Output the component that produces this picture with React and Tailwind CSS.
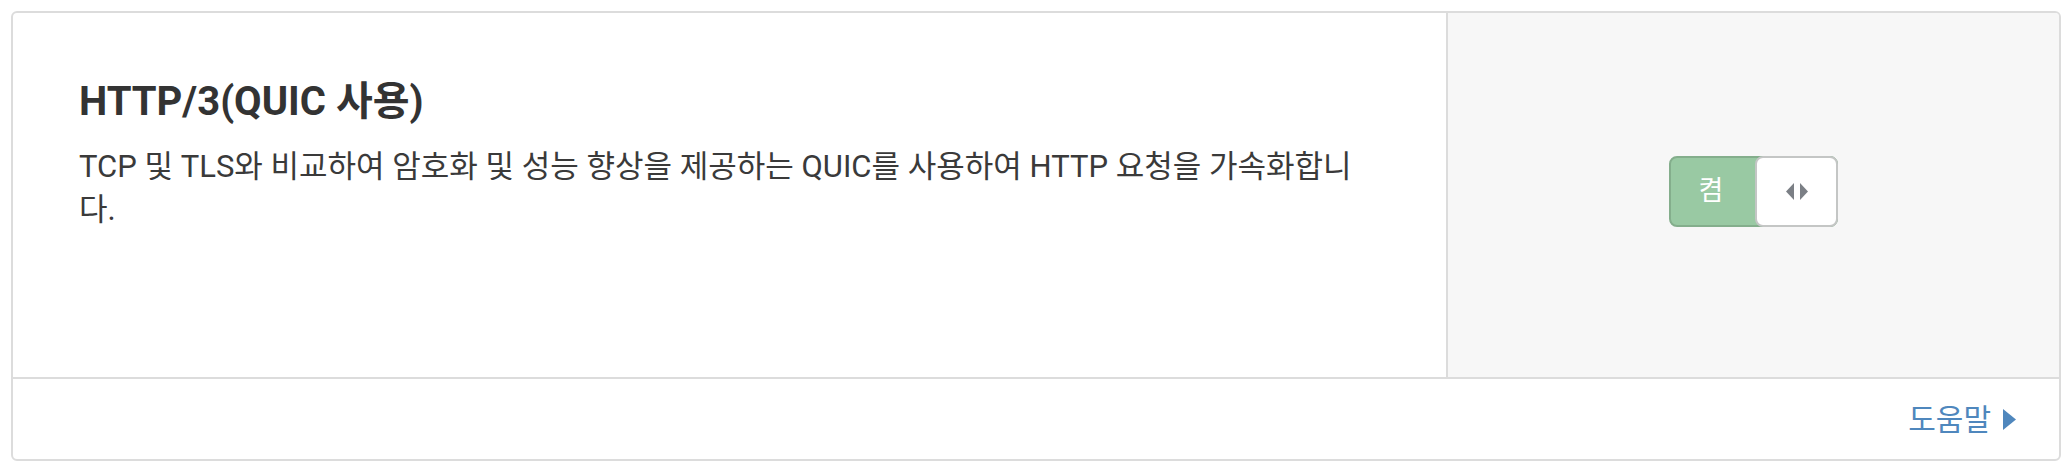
import React from 'react';

const font = { fontFamily: 'Roboto, "Noto Sans CJK KR", sans-serif' };

const Toggle = () => {
  return (
    <div className="flex h-[71px] w-[169px] rounded-[8px] border-2 border-[#84ae8c] bg-[#99c9a3]">
      <div className="flex w-[84px] items-center justify-center pr-[4px] text-[27px] text-white">켬</div>
      <div className="-my-[2px] -mr-[2px] flex flex-1 items-center justify-center gap-[6px] rounded-[8px] border-2 border-[#c4c6c5] bg-white">
        <svg width="8" height="17" viewBox="0 0 8 17">
          <path d="M8 0 L0 8.5 L8 17 Z" fill="#7b7f85" />
        </svg>
        <svg width="8" height="17" viewBox="0 0 8 17">
          <path d="M0 0 L8 8.5 L0 17 Z" fill="#7b7f85" />
        </svg>
      </div>
    </div>
  );
};

export default function App() {
  return (
    <div className="min-h-screen bg-white p-[11px]" style={font}>
      <div className="overflow-hidden rounded-[6px] border-2 border-[#dcdcdc]">
        <div className="flex h-[364px]">
          <div className="flex-1 px-[66px] pt-[66px]">
            <h2 className="text-[40px] font-bold leading-[46px] text-[#333333]">HTTP/3(QUIC 사용)</h2>
            <p className="mt-[20px] text-[31px] leading-[43px] text-[#3a3a3a]">
              TCP 및 TLS와 비교하여 암호화 및 성능 향상을 제공하는 QUIC를 사용하여 HTTP 요청을 가속화합니다.
            </p>
          </div>
          <div className="flex w-[613px] items-center justify-center border-l-2 border-[#dcdcdc] bg-[#f7f7f7] pb-[8px]">
            <Toggle />
          </div>
        </div>
        <div className="flex h-[82px] items-center justify-end border-t-2 border-[#dcdcdc] pr-[43px]">
          <a href="#" className="flex items-center gap-[12px] text-[30px] text-[#4f87bd]">
            도움말
            <svg width="13" height="21" viewBox="0 0 13 21">
              <path d="M0 0 L13 10.5 L0 21 Z" fill="#4f87bd" />
            </svg>
          </a>
        </div>
      </div>
    </div>
  );
}
